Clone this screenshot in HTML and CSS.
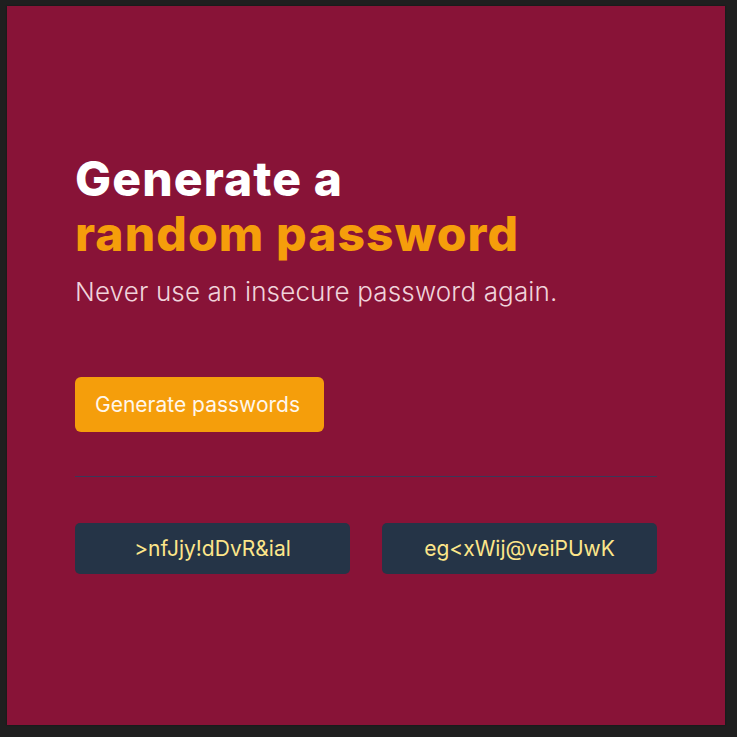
FILE: index.html
```html
<!DOCTYPE html>
<html>
<head>
<meta charset="utf-8">
<link rel="stylesheet" href="styles.css">
</head>
<body>
<main class="panel">
  <div class="content">
    <h1 class="title">Generate a<br><span class="accent">random password</span></h1>
    <p class="subtitle">Never use an insecure password again.</p>
    <button class="generate">Generate passwords</button>
    <div class="divider"></div>
    <div class="results">
      <div class="pw">&gt;nfJjy!dDvR&amp;ial</div>
      <div class="pw">eg&lt;xWij@veiPUwK</div>
    </div>
  </div>
</main>
</body>
</html>
```
FILE: styles.css
```css
html, body { margin: 0; padding: 0; }
body {
  background: #1f1f1f;
  width: 737px;
  height: 737px;
  padding: 6px 12px 12px 7px;
  box-sizing: border-box;
  font-family: Inter, "Noto Sans", sans-serif;
}
.panel {
  background: #881337;
  height: 719px;
  width: 718px;
  box-sizing: border-box;
  padding: 145px 68px 0;
  box-shadow: 0 0 2px rgba(0,0,0,0.4);
}
.content {
  width: 582px;
}
.title {
  margin: 0;
  font-size: 48px;
  line-height: 55px;
  font-weight: 800;
  color: #ffffff;
  letter-spacing: 1.1px;
}
.accent { color: #f59e0b; }
.subtitle {
  margin: 15px 0 0;
  font-size: 26px;
  line-height: 32px;
  font-weight: 300;
  letter-spacing: 0.15px;
  color: #f0d3db;
}
.generate {
  margin-top: 69px;
  height: 55px;
  width: 249px;
  padding: 0 0 0 20px;
  text-align: left;
  border: none;
  border-radius: 6px;
  background: #f59e0b;
  color: #fff7ec;
  font-family: Inter, sans-serif;
  font-size: 21px;
  display: block;
}
.divider {
  margin-top: 44px;
  height: 0;
  border-top: 1px solid #3a3858;
}
.results {
  margin-top: 46px;
  display: grid;
  grid-template-columns: 1fr 1fr;
  gap: 32px;
}
.pw {
  background: #253447;
  border-radius: 5px;
  height: 51px;
  display: flex;
  align-items: center;
  justify-content: center;
  color: #fde68a;
  font-size: 21px;
}
```
